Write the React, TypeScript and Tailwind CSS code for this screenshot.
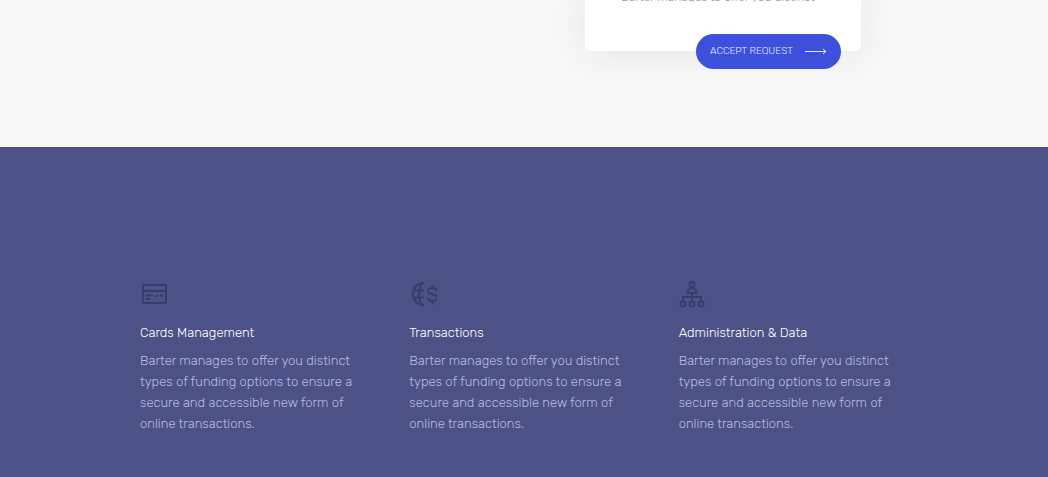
import React from "react";

type Feature = { title: string; icon: React.ReactNode };

const copy =
  "Barter manages to offer you distinct types of funding options to ensure a secure and accessible new form of online transactions.";

const iconProps = {
  width: 28,
  height: 28,
  viewBox: "0 0 28 28",
  fill: "none",
  stroke: "currentColor",
  strokeWidth: 2,
  "aria-hidden": true,
} as const;

function CardIcon() {
  return (
    <svg {...iconProps}>
      <rect x="3" y="5" width="23" height="18" rx="1" />
      <path d="M3 11h23" />
      <path d="M6 15.500h7M6 19h4M15 16h3M20 15.500h3" />
    </svg>
  );
}

function GlobeDollarIcon() {
  return (
    <svg {...iconProps}>
      <path d="M15 3C8 3 4 8 4 14s4 11 11 11" />
      <path d="M14 3c-3 2-4 6-4 11s1 9 4 11M4 10.500h11M4 17.500h11" />
      <path d="M28 11.500c0-2.500-2-3.500-4.500-3.500S19 9 19 11s2 2.800 4.500 3.200S28 15.500 28 17.500 26 21 23.500 21 19 19.800 19 17.500M23.500 4.500V8M23.500 21v3.500" />
    </svg>
  );
}

function OrgIcon() {
  return (
    <svg {...iconProps}>
      <circle cx="13" cy="4.500" r="2.500" />
      <path d="M8.500 13c0-3 2-5 4.500-5s4.500 2 4.500 5z" />
      <path d="M13 13v8M4 21v-4h18v4" />
      <circle cx="4" cy="24" r="2.500" />
      <circle cx="13" cy="24" r="2.500" />
      <circle cx="22" cy="24" r="2.500" />
    </svg>
  );
}

const features: Feature[] = [
  { title: "Cards Management", icon: <CardIcon /> },
  { title: "Transactions", icon: <GlobeDollarIcon /> },
  { title: "Administration & Data", icon: <OrgIcon /> },
];

export default function App() {
  return (
    <main className="min-h-screen bg-[#4c5285] font-['Rubik','Roboto',sans-serif]">
      <section className="flex justify-end bg-[#f8f8f8] pr-[187px] pb-24">
        <div className="flex w-[276px] flex-col items-end rounded-b-md bg-white pr-5 shadow-[0_0_40px_rgba(40,40,70,0.10)]">
          <div className="flex h-0.5 items-end self-start overflow-hidden pl-9">
            <p className="text-xs leading-[10px] font-light whitespace-nowrap text-[#999999]">
              Barter manages to offer you distinct
            </p>
          </div>
          <button
            type="button"
            className="mt-8 -mb-[18px] flex h-[35px] w-[145px] items-center justify-between rounded-full bg-[#3c50dc] px-3.5 text-[10px] font-light text-[#e6e9ff]"
          >
            ACCEPT REQUEST
            <svg width="22" height="8" viewBox="0 0 22 8" fill="none" stroke="currentColor" aria-hidden="true">
              <path d="M0 3.500h21M18 1l3 2.500-3 2.500" />
            </svg>
          </button>
        </div>
      </section>
      <section className="grid grid-cols-3 gap-x-10 pt-[133px] pr-[140px] pb-11 pl-[140px]">
        {features.map((f) => (
          <article key={f.title}>
            <div className="text-[#363c6f]">{f.icon}</div>
            <h2 className="mt-4 text-[13px] leading-[18px] font-light text-white">{f.title}</h2>
            <p className="mt-2 text-[13px] leading-[21px] font-light text-[#b6bbe0]">{copy}</p>
          </article>
        ))}
      </section>
    </main>
  );
}
